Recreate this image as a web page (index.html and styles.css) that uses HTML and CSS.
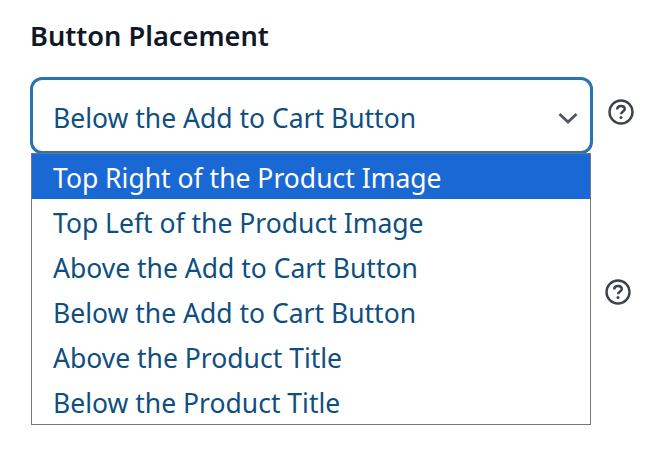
FILE: index.html
```html
<!DOCTYPE html>
<html lang="en">
<head>
    <meta charset="UTF-8">
    <meta name="viewport" content="width=device-width, initial-scale=1.0">
    <title>Button Placement</title>
    <link rel="stylesheet" href="styles.css">
</head>
<body>
    <div class="container">
        <h2 class="field-title">Button Placement</h2>
        <div class="field-row">
            <div class="select-wrap">
                <div class="select-box">
                    <span>Below the Add to Cart Button</span>
                    <svg class="chevron" width="20" height="12" viewBox="0 0 20 12">
                        <path d="M1.5 2 L10 10 L18.5 2" fill="none" stroke="#50575e" stroke-width="2.8"/>
                    </svg>
                </div>
                <ul class="options">
                    <li class="selected">Top Right of the Product Image</li>
                    <li>Top Left of the Product Image</li>
                    <li>Above the Add to Cart Button</li>
                    <li>Below the Add to Cart Button</li>
                    <li>Above the Product Title</li>
                    <li>Below the Product Title</li>
                </ul>
            </div>
            <svg class="help" width="28" height="28" viewBox="0 0 28 28">
                <circle cx="14" cy="14" r="11.5" fill="none" stroke="#3c434a" stroke-width="2.4"/>
                <path d="M10.2 11.4 C10.2 9.2 11.9 8 14 8 C16.2 8 17.8 9.3 17.8 11.1 C17.8 13.4 14.1 13.6 14.1 16.2" fill="none" stroke="#3c434a" stroke-width="2.4"/>
                <circle cx="14" cy="19.6" r="1.5" fill="#3c434a"/>
            </svg>
        </div>
        <div class="field-row next-row">
            <svg class="help" width="28" height="28" viewBox="0 0 28 28">
                <circle cx="14" cy="14" r="11.5" fill="none" stroke="#3c434a" stroke-width="2.4"/>
                <path d="M10.2 11.4 C10.2 9.2 11.9 8 14 8 C16.2 8 17.8 9.3 17.8 11.1 C17.8 13.4 14.1 13.6 14.1 16.2" fill="none" stroke="#3c434a" stroke-width="2.4"/>
                <circle cx="14" cy="19.6" r="1.5" fill="#3c434a"/>
            </svg>
        </div>
    </div>
</body>
</html>
```

FILE: styles.css
```css
html, body {
    height: 100%;
}
body {
    margin: 0;
    background-color: #fff;
    font-family: "Noto Sans", "Open Sans", sans-serif;
}
.container {
    box-sizing: border-box;
    height: 452px;
    padding: 18px 0 0 30px;
}
.field-title {
    margin: 0 0 23px 0;
    font-size: 27.2px;
    line-height: 36px;
    font-weight: 600;
    color: #101828;
}
.field-row {
    display: flex;
    align-items: center;
}
.select-wrap {
    position: relative;
    width: 563px;
}
.select-box {
    display: flex;
    align-items: center;
    justify-content: space-between;
    box-sizing: border-box;
    height: 77px;
    padding: 4px 12px 0 20px;
    border: 3px solid #2874b2;
    border-radius: 12px;
    background-color: #fff;
    font-size: 26.5px;
    color: #0f4f7f;
}
.chevron {
    display: block;
}
.options {
    position: absolute;
    top: 76px;
    left: 1px;
    width: 560px;
    box-sizing: border-box;
    margin: 0;
    padding: 0;
    list-style: none;
    border: 1px solid #767676;
    background-color: #fff;
    font-size: 26.5px;
    color: #0f4f7f;
}
.options li {
    box-sizing: border-box;
    height: 45px;
    line-height: 45px;
    padding: 2px 0 0 21px;
}
.options .selected {
    background-color: #1a68d4;
    color: #fff;
}
.help {
    display: block;
    margin: 0 0 2px 14px;
}
.select-wrap + .help {
    margin-bottom: 8px;
}
.next-row {
    margin-top: 124px;
    padding-left: 560px;
}
```
